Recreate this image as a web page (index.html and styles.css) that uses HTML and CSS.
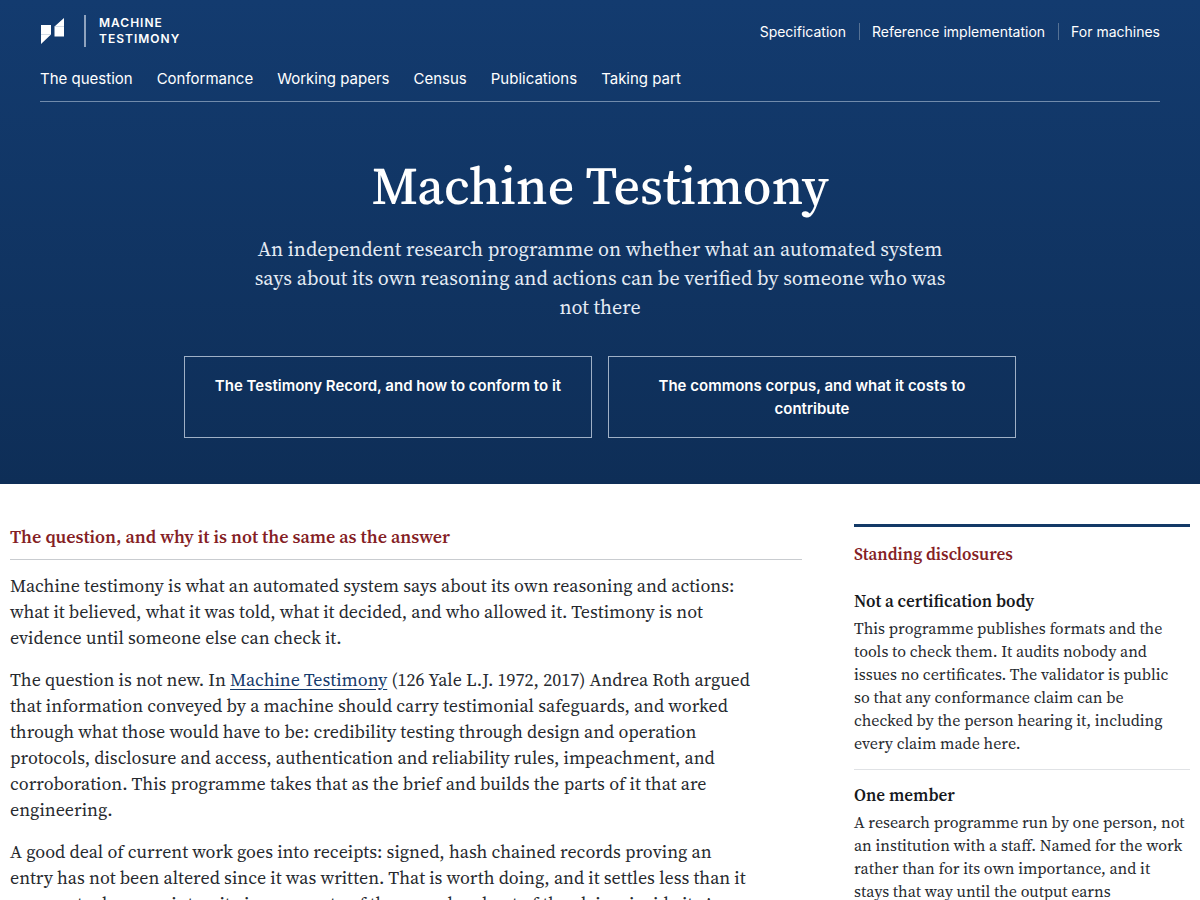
FILE: index.html
```html
<!DOCTYPE html>
<html lang="en-GB">
<head>
    <meta charset="UTF-8">
    <meta name="viewport" content="width=device-width, initial-scale=1.0">
    <title>Machine Testimony</title>
    <link rel="stylesheet" href="styles.css">
</head>
<body>
    <header class="masthead">
        <div class="top">
            <a class="brand" href="#">
                <svg class="mark" viewBox="0 0 24 26" aria-hidden="true">
                    <path d="M1 7h10v9.500L1 26z M14.500 8.500L24 0v18.500h-9.500z" fill="#fff"/>
                    <path d="M1 16.500h10M14.500 8.500H24" stroke="#a9bacf" stroke-width=".5"/>
                </svg>
                <span class="brand-name">Machine<br>Testimony</span>
            </a>
            <nav class="utility" aria-label="Reference">
                <a href="#">Specification</a>
                <a href="#">Reference implementation</a>
                <a href="#">For machines</a>
            </nav>
        </div>
        <nav class="main-nav" aria-label="Main">
            <a href="#question">The question</a>
            <a href="#">Conformance</a>
            <a href="#">Working papers</a>
            <a href="#">Census</a>
            <a href="#">Publications</a>
            <a href="#">Taking part</a>
        </nav>
        <div class="hero">
            <h1>Machine Testimony</h1>
            <p class="lede">An independent research programme on whether what an automated system says about its own reasoning and actions can be verified by someone who was not there</p>
            <div class="actions">
                <a href="#">The Testimony Record, and how to conform to it</a>
                <a href="#">The commons corpus, and what it costs to contribute</a>
            </div>
        </div>
    </header>

    <div class="page">
        <main id="question">
            <h2>The question, and why it is not the same as the answer</h2>
            <p>Machine testimony is what an automated system says about its own reasoning and actions: what it believed, what it was told, what it decided, and who allowed it. Testimony is not evidence until someone else can check it.</p>
            <p>The question is not new. In <a href="#">Machine Testimony</a> (126 Yale L.J. 1972, 2017) Andrea Roth argued that information conveyed by a machine should carry testimonial safeguards, and worked through what those would have to be: credibility testing through design and operation protocols, disclosure and access, authentication and reliability rules, impeachment, and corroboration. This programme takes that as the brief and builds the parts of it that are engineering.</p>
            <p>A good deal of current work goes into receipts: signed, hash chained records proving an entry has not been altered since it was written. That is worth doing, and it settles less than it appears to, because integrity is a property of the record and not of the claims inside it. A record can be intact and still be wrong.</p>
        </main>

        <aside class="disclosures">
            <h2>Standing disclosures</h2>
            <section>
                <h3>Not a certification body</h3>
                <p>This programme publishes formats and the tools to check them. It audits nobody and issues no certificates. The validator is public so that any conformance claim can be checked by the person hearing it, including every claim made here.</p>
            </section>
            <section>
                <h3>One member</h3>
                <p>A research programme run by one person, not an institution with a staff. Named for the work rather than for its own importance, and it stays that way until the output earns something larger.</p>
            </section>
        </aside>
    </div>
</body>
</html>
```
FILE: styles.css
```css
* {
    box-sizing: border-box;
}

body {
    margin: 0;
    background: #fff;
    color: #26292e;
    font-family: "Source Serif 4", "Source Serif Pro", "Liberation Serif", serif;
    font-size: 18px;
}

.masthead {
    padding: 15px 40px 46px;
    background: linear-gradient(#133b6f, #0e2e57);
    color: #fff;
}

.masthead a {
    color: #fff;
    text-decoration: none;
}

.top,
.brand,
.utility,
.main-nav {
    display: flex;
    align-items: center;
    font-family: Inter, sans-serif;
}

.top {
    justify-content: space-between;
}

.mark {
    width: 24px;
    height: 26px;
    margin-right: 20px;
}

.brand-name {
    padding-left: 13px;
    border-left: 2px solid #8fa3be;
    font-size: 12px;
    font-weight: 600;
    line-height: 16px;
    letter-spacing: 1px;
    text-transform: uppercase;
}

.utility {
    font-size: 14px;
}

.utility a + a {
    margin-left: 13px;
    padding-left: 12px;
    border-left: 1px solid #557194;
}

.main-nav {
    gap: 24px;
    margin-top: 22px;
    padding-bottom: 12px;
    border-bottom: 1px solid #718bac;
    font-size: 15px;
    line-height: 20px;
}

.hero {
    padding-top: 52px;
    text-align: center;
}

h1 {
    margin: 0 0 17px;
    font-family: "Source Serif 4 Display", "Source Serif 4", "Source Serif Pro", "Liberation Serif", serif;
    font-size: 52px;
    font-weight: 500;
    line-height: 64px;
}

.lede {
    max-width: 704px;
    margin: 0 auto 34px;
    color: #e4ebf4;
    font-size: 20px;
    line-height: 29px;
}

.actions {
    display: grid;
    grid-template-columns: 1fr 1fr;
    gap: 16px;
    max-width: 832px;
    margin: 0 auto;
}

.actions a {
    padding: 17px 24px;
    border: 1px solid #9fb0c6;
    font-family: Inter, sans-serif;
    font-size: 15px;
    font-weight: 600;
    line-height: 23px;
}

.page {
    display: grid;
    grid-template-columns: minmax(0, 1fr) 336px;
    gap: 52px;
    max-width: 1200px;
    margin: 0 auto;
    padding: 40px 10px;
}

h2 {
    margin: 0;
    color: #842024;
    font-size: 18px;
    font-weight: 600;
    line-height: 26px;
}

main h2 {
    margin-bottom: 13px;
    padding-bottom: 9px;
    border-bottom: 1px solid #c9ccd0;
}

main p {
    max-width: 742px;
    margin: 0 0 16px;
    line-height: 26px;
}

main a {
    color: #153a6b;
    text-decoration: underline;
    text-underline-offset: 3px;
}

.disclosures {
    padding-top: 14px;
    border-top: 3px solid #133967;
}

.disclosures h2 {
    margin-bottom: 9px;
    font-size: 17px;
}

.disclosures section {
    padding: 12px 0 14px;
    border-bottom: 1px solid #e0e2e5;
}

h3 {
    margin: 0 0 3px;
    color: #16181c;
    font-size: 17px;
    font-weight: 600;
    line-height: 26px;
}

.disclosures p {
    max-width: 332px;
    margin: 0;
    font-size: 16px;
    line-height: 23px;
}

@media (max-width: 800px) {
    .page,
    .actions {
        grid-template-columns: 1fr;
    }

    .top,
    .main-nav {
        flex-wrap: wrap;
    }
}
```
